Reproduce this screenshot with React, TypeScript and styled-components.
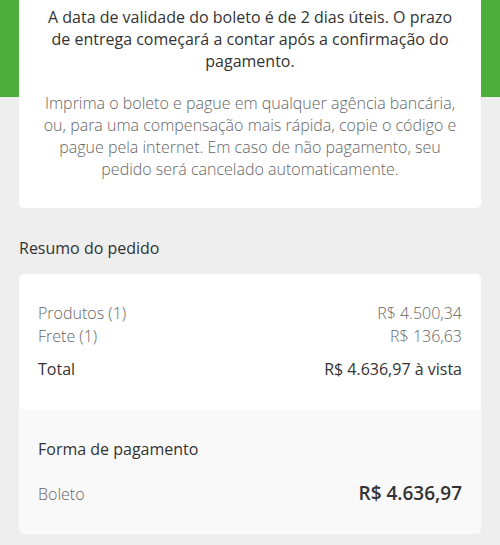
import * as React from 'react';
import styled, { createGlobalStyle } from 'styled-components';

const GlobalStyle = createGlobalStyle`
    html, body {
        margin: 0;
        padding: 0;
        background: #eeeeee;
    }
    body {
        font-family: 'Open Sans', 'Noto Sans', sans-serif;
        -webkit-font-smoothing: antialiased;
    }
`;

const Page = styled.div`
    display: flex;
    flex-direction: column;
    padding: 0 19px 12px;
    min-height: 545px;
    box-sizing: border-box;
    background: linear-gradient(#4caf3c 0, #4caf3c 97px, #eeeeee 97px);
`;

const NoticeCard = styled.section`
    display: flex;
    flex-direction: column;
    gap: 20px;
    padding: 6px 20px 28px;
    background: #ffffff;
    border-radius: 0 0 5px 5px;
    text-align: center;
`;

const Paragraph = styled.p<{ $muted?: boolean }>`
    margin: 0;
    font-size: 16px;
    line-height: 22px;
    font-weight: ${(p) => (p.$muted ? 300 : 400)};
    color: ${(p) => (p.$muted ? '#666666' : '#333333')};
`;

const SectionTitle = styled.h2`
    margin: 29px 0 14px;
    font-size: 16px;
    line-height: 23px;
    font-weight: 400;
    color: #333333;
`;

const SummaryCard = styled.section`
    display: flex;
    flex-direction: column;
    border-radius: 5px;
    overflow: hidden;
`;

const CardSection = styled.div<{ $tone: 'white' | 'soft' }>`
    display: flex;
    flex-direction: column;
    padding: ${(p) => (p.$tone === 'white' ? '28px 19px 28px' : '29px 19px 28px')};
    background: ${(p) => (p.$tone === 'white' ? '#ffffff' : '#f9f9f9')};
`;

const Row = styled.div<{ $spaced?: boolean }>`
    display: flex;
    justify-content: space-between;
    align-items: baseline;
    margin-top: ${(p) => (p.$spaced ? '10px' : '0')};
    font-size: 16px;
    line-height: 23px;
`;

const Label = styled.span<{ $strong?: boolean }>`
    font-weight: ${(p) => (p.$strong ? 400 : 300)};
    color: ${(p) => (p.$strong ? '#333333' : '#666666')};
`;

const Value = styled.span<{ $strong?: boolean }>`
    font-weight: ${(p) => (p.$strong ? 400 : 300)};
    color: ${(p) => (p.$strong ? '#333333' : '#666666')};
`;

const PaymentTitle = styled.h3`
    margin: 0 0 21px;
    font-size: 16px;
    line-height: 23px;
    font-weight: 400;
    color: #333333;
`;

const PaymentAmount = styled.span`
    font-size: 19px;
    font-weight: 600;
    color: #333333;
`;

const summaryItems = [
    { label: 'Produtos (1)', value: 'R$ 4.500,34' },
    { label: 'Frete (1)', value: 'R$ 136,63' },
];

export default function App() {
    return (
        <>
            <GlobalStyle />
            <Page>
                <NoticeCard>
                    <Paragraph>
                        A data de validade do boleto é de 2 dias úteis. O prazo de entrega começará a contar após a
                        confirmação do pagamento.
                    </Paragraph>
                    <Paragraph $muted>
                        Imprima o boleto e pague em qualquer agência bancária, ou, para uma compensação mais rápida,
                        copie o código e pague pela internet. Em caso de não pagamento, seu pedido será cancelado
                        automaticamente.
                    </Paragraph>
                </NoticeCard>

                <SectionTitle>Resumo do pedido</SectionTitle>

                <SummaryCard>
                    <CardSection $tone="white">
                        {summaryItems.map((item) => (
                            <Row key={item.label}>
                                <Label>{item.label}</Label>
                                <Value>{item.value}</Value>
                            </Row>
                        ))}
                        <Row $spaced>
                            <Label $strong>Total</Label>
                            <Value $strong>R$ 4.636,97 à vista</Value>
                        </Row>
                    </CardSection>
                    <CardSection $tone="soft">
                        <PaymentTitle>Forma de pagamento</PaymentTitle>
                        <Row>
                            <Label>Boleto</Label>
                            <PaymentAmount>R$ 4.636,97</PaymentAmount>
                        </Row>
                    </CardSection>
                </SummaryCard>
            </Page>
        </>
    );
}
